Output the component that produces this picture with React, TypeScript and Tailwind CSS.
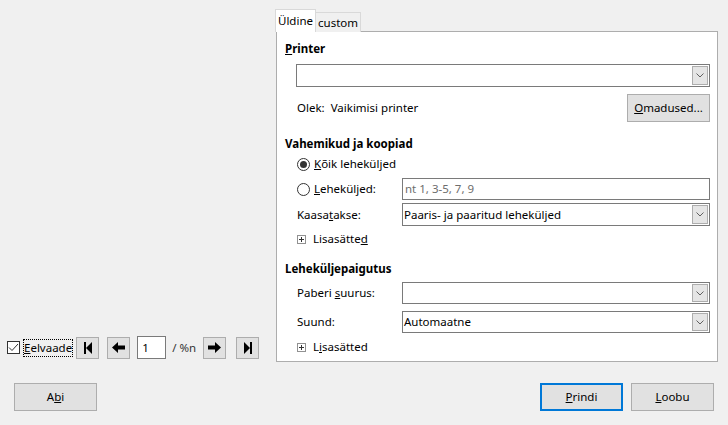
import React from "react";

const font = { fontFamily: '"Noto Sans", "Liberation Sans", sans-serif' };

const Chevron = () => (
  <svg width="8" height="5" viewBox="0 0 8 5" className="text-[#606060]">
    <path d="M0.5 0.5 L4 4 L7.5 0.5" fill="none" stroke="currentColor" strokeWidth="1" />
  </svg>
);

const Combo = ({ value }: { value?: string }) => (
  <div className="flex h-full w-full border border-[#7a7a7a] bg-white">
    <div className="flex flex-1 items-center pl-[1px] text-black">{value}</div>
    <div className="m-[1px] flex w-[16px] items-center justify-center border border-[#adadad] bg-[#e5e5e5]">
      <Chevron />
    </div>
  </div>
);

const Plus = () => (
  <svg width="9" height="9" viewBox="0 0 9 9">
    <rect x="0.5" y="0.5" width="8" height="8" fill="#fff" stroke="#919191" />
    <path d="M2 4.5 H7 M4.5 2 V7" stroke="#333" strokeWidth="1" />
  </svg>
);

const Radio = ({ on }: { on?: boolean }) => (
  <span className="flex h-[13px] w-[13px] items-center justify-center rounded-full border border-[#333] bg-white">
    {on && <span className="h-[7px] w-[7px] rounded-full bg-[#333]" />}
  </span>
);

const NavBtn = ({ children }: { children: React.ReactNode }) => (
  <button className="flex h-[22px] w-[23px] items-center justify-center border border-[#adadad] bg-[#e1e1e1]">
    {children}
  </button>
);

const Btn = ({ children, primary }: { children: React.ReactNode; primary?: boolean }) => (
  <button
    className={
      primary
        ? "flex h-[28px] w-[83px] items-center justify-center border-2 border-[#0078d7] bg-[#e1e1e1] text-black"
        : "flex h-[28px] w-[83px] items-center justify-center border border-[#adadad] bg-[#e1e1e1] text-black"
    }
  >
    {children}
  </button>
);

export default function App() {
  return (
    <div className="flex h-[425px] w-[728px] flex-col bg-[#f0f0f0] text-[11.5px] text-black" style={font}>
      <div className="flex">
        {/* left: preview controls */}
        <div className="flex w-[275px] flex-col justify-end pb-[3px] pl-[7px]">
          <div className="flex h-[23px] items-center">
            <span className="flex h-[13px] w-[13px] items-center justify-center border border-[#333] bg-white">
              <svg width="11" height="9" viewBox="0 0 11 9">
                <path d="M1 4.5 L4 7.5 L10 1" fill="none" stroke="#333" strokeWidth="1" />
              </svg>
            </span>
            <span className="ml-[3px] border border-dotted border-black leading-[16px]">
              <u>E</u>elvaade
            </span>
            <div className="ml-[3px]">
              <NavBtn>
                <svg width="10" height="14" viewBox="0 0 10 14">
                  <rect x="1" y="1" width="2" height="12" fill="#000" />
                  <path d="M9 1 L3 7 L9 13 Z" fill="#000" />
                </svg>
              </NavBtn>
            </div>
            <div className="ml-[8px]">
              <NavBtn>
                <svg width="15" height="13" viewBox="0 0 15 13">
                  <path d="M1 6.5 L7 1 V4.5 H14 V8.5 H7 V12 Z" fill="#000" />
                </svg>
              </NavBtn>
            </div>
            <div className="ml-[7px] flex h-[23px] w-[29px] items-center border border-[#7a7a7a] bg-white pl-[4px]">1</div>
            <span className="ml-[6px] text-[#333]">/ %n</span>
            <div className="ml-[7px]">
              <NavBtn>
                <svg width="15" height="13" viewBox="0 0 15 13">
                  <path d="M14 6.5 L8 1 V4.5 H1 V8.5 H8 V12 Z" fill="#000" />
                </svg>
              </NavBtn>
            </div>
            <div className="ml-[10px]">
              <NavBtn>
                <svg width="10" height="14" viewBox="0 0 10 14">
                  <path d="M1 1 L7 7 L1 13 Z" fill="#000" />
                  <rect x="7" y="1" width="2" height="12" fill="#000" />
                </svg>
              </NavBtn>
            </div>
          </div>
        </div>

        {/* right: tabs + panel */}
        <div className="flex flex-col pt-[9px]">
          <div className="relative z-10 -mb-[1px] flex items-end">
            <div className="flex h-[23px] w-[41px] items-center justify-center border border-b-0 border-[#d9d9d9] bg-white">
              Üldine
            </div>
            <div className="flex h-[20px] w-[45px] items-center justify-center border border-b-0 border-l-0 border-[#d9d9d9] bg-[#f0f0f0]">
              custom
            </div>
          </div>
          <div className="ml-[1px] flex h-[331px] w-[442px] flex-col border border-[#adadad] bg-white pl-[8px] pr-[7px]">
            <div className="mt-[9px] h-[16px] font-bold leading-[16px]">
              <u>P</u>rinter
            </div>
            <div className="ml-[11px] mt-[7px] h-[23px]">
              <Combo />
            </div>
            <div className="ml-[12px] mt-[7px] flex h-[28px] items-center">
              <span>Olek:</span>
              <span className="ml-[6px]">Vaikimisi printer</span>
              <div className="ml-auto">
                <Btn>
                  <span>
                    <u>O</u>madused...
                  </span>
                </Btn>
              </div>
            </div>

            <div className="mt-[14px] h-[16px] font-bold leading-[16px]">Vahemikud ja koopiad</div>
            <div className="ml-[12px] mt-[4px] flex h-[16px] items-center">
              <Radio on />
              <span className="ml-[4px]">
                <u>K</u>õik leheküljed
              </span>
            </div>
            <div className="ml-[12px] mt-[6px] flex h-[22px] items-center">
              <div className="flex w-[105px] items-center">
                <Radio />
                <span className="ml-[4px]">
                  <u>L</u>eheküljed:
                </span>
              </div>
              <div className="flex h-full flex-1 items-center border border-[#7a7a7a] bg-white pl-[2px] text-[#6d6d6d]">
                nt 1, 3-5, 7, 9
              </div>
            </div>
            <div className="ml-[12px] mt-[3px] flex h-[23px] items-center">
              <span className="w-[105px]">
                Kaasa<u>t</u>akse:
              </span>
              <div className="h-full flex-1">
                <Combo value="Paaris- ja paaritud leheküljed" />
              </div>
            </div>
            <div className="ml-[12px] mt-[5px] flex h-[16px] items-center">
              <Plus />
              <span className="ml-[7px]">
                Lisasätte<u>d</u>
              </span>
            </div>

            <div className="mt-[14px] h-[16px] font-bold leading-[16px]">Leheküljepaigutus</div>
            <div className="ml-[12px] mt-[5px] flex h-[22px] items-center">
              <span className="w-[105px]">
                Paberi <u>s</u>uurus:
              </span>
              <div className="h-full flex-1">
                <Combo />
              </div>
            </div>
            <div className="ml-[12px] mt-[7px] flex h-[22px] items-center">
              <span className="w-[105px]">Suund:</span>
              <div className="h-full flex-1">
                <Combo value="Automaatne" />
              </div>
            </div>
            <div className="ml-[12px] mt-[6px] flex h-[16px] items-center">
              <Plus />
              <span className="ml-[7px]">
                L<u>i</u>sasätted
              </span>
            </div>
          </div>
        </div>
      </div>

      {/* bottom buttons */}
      <div className="mt-[21px] flex items-center pl-[14px] pr-[14px]">
        <Btn>
          <span>
            A<u>b</u>i
          </span>
        </Btn>
        <div className="ml-auto flex gap-[8px]">
          <Btn primary>
            <span>
              <u>P</u>rindi
            </span>
          </Btn>
          <Btn>
            <span>
              <u>L</u>oobu
            </span>
          </Btn>
        </div>
      </div>
    </div>
  );
}
